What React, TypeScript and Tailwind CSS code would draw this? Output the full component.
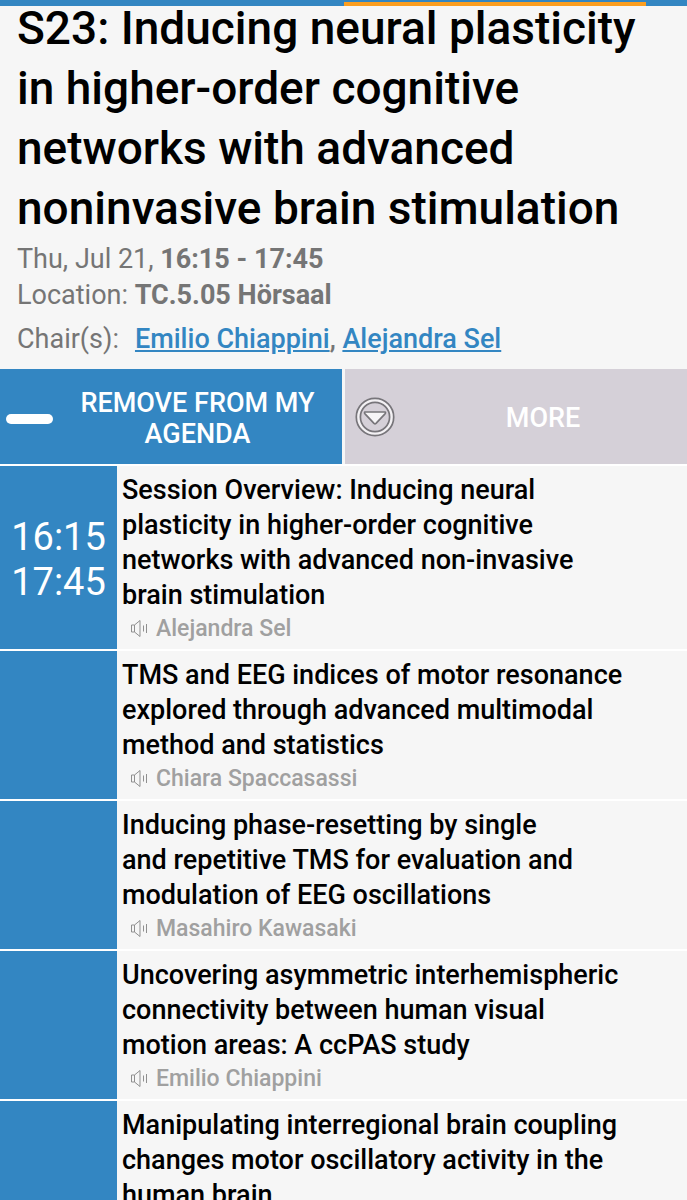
type Talk = {
  lines: string[];
  speaker?: string;
  start?: string;
  end?: string;
};

const talks: Talk[] = [
  {
    start: '16:15',
    end: '17:45',
    lines: [
      'Session Overview: Inducing neural',
      'plasticity in higher-order cognitive',
      'networks with advanced non-invasive',
      'brain stimulation',
    ],
    speaker: 'Alejandra Sel',
  },
  {
    lines: [
      'TMS and EEG indices of motor resonance',
      'explored through advanced multimodal',
      'method and statistics',
    ],
    speaker: 'Chiara Spaccasassi',
  },
  {
    lines: [
      'Inducing phase-resetting by single',
      'and repetitive TMS for evaluation and',
      'modulation of EEG oscillations',
    ],
    speaker: 'Masahiro Kawasaki',
  },
  {
    lines: [
      'Uncovering asymmetric interhemispheric',
      'connectivity between human visual',
      'motion areas: A ccPAS study',
    ],
    speaker: 'Emilio Chiappini',
  },
  {
    lines: [
      'Manipulating interregional brain coupling',
      'changes motor oscillatory activity in the',
      'human brain',
    ],
  },
];

function SpeakerIcon() {
  return (
    <svg width="18" height="18" viewBox="0 0 18 18" fill="none" stroke="#8f8f8f" aria-hidden="true">
      <path d="M1.5 5h3v7h-3zM4.5 5l5.5-4.5v16l-5.5-4.5" />
      <path d="M13.5 5.5v6M16.5 4v9" />
    </svg>
  );
}

function MoreIcon() {
  return (
    <svg width="40" height="40" viewBox="0 0 40 40" fill="none" aria-hidden="true">
      <circle cx="20" cy="20" r="16.8" stroke="#f3f1f4" strokeWidth="3.4" />
      <circle cx="20" cy="20" r="18.7" stroke="#77757a" strokeWidth="1.7" />
      <circle cx="20" cy="20" r="14.6" stroke="#77757a" strokeWidth="1.7" />
      <path d="M10 15h20q1 .5 0 1.8l-9 9.6q-1 .8-2 0l-9-9.6q-1-1.3 0-1.8z" fill="#f6f5f7" stroke="#77757a" strokeWidth="1.7" strokeLinejoin="round" />
    </svg>
  );
}

function TalkRow({ talk }: { talk: Talk }) {
  return (
    <li className="flex border-b-2 border-white">
      <div className="flex w-[117px] shrink-0 flex-col items-center justify-center bg-[#3386c2] pt-1 text-[38px] leading-[45px] text-white">
        {talk.start && <time>{talk.start}</time>}
        {talk.end && <time>{talk.end}</time>}
      </div>
      <div className="min-w-0 flex-1 pt-[7px] pb-1 pl-[5px]">
        <h2 className="text-[27px] leading-[35px] font-medium">
          {talk.lines.map((line) => (
            <span key={line} className="block whitespace-nowrap">
              {line}
            </span>
          ))}
        </h2>
        <div className="flex h-8 items-center gap-2 pl-2 text-[23px] font-medium text-[#a0a0a0]">
          {talk.speaker && (
            <>
              <SpeakerIcon />
              <span>{talk.speaker}</span>
            </>
          )}
        </div>
      </div>
    </li>
  );
}

export default function App() {
  return (
    <div className="min-h-screen bg-[#f6f6f6] font-['Roboto',sans-serif] text-black">
      <div className="flex h-[6px] items-end bg-[#3386c2]">
        <div className="ml-[50%] h-1 w-[44%] bg-[#fb9e20]" />
      </div>

      <header className="px-[17px]">
        <h1 className="-mt-2 text-[46px] leading-[60px] font-medium">
          <span className="block whitespace-nowrap">S23: Inducing neural plasticity</span>
          <span className="block whitespace-nowrap">in higher-order cognitive</span>
          <span className="block whitespace-nowrap">networks with advanced</span>
          <span className="block whitespace-nowrap">noninvasive brain stimulation</span>
        </h1>
        <div className="pt-[3px] text-[27px] leading-9 text-[#757575]">
          <p>
            Thu, Jul 21, <b>16:15 - 17:45</b>
          </p>
          <p>
            Location: <b>TC.5.05 Hörsaal</b>
          </p>
          <p className="mt-2 flex gap-4 pb-3">
            <span>Chair(s):</span>
            <span className="font-medium">
              <a href="#emilio-chiappini" className="text-[#3386c2] underline">
                Emilio Chiappini
              </a>
              ,{' '}
              <a href="#alejandra-sel" className="text-[#3386c2] underline">
                Alejandra Sel
              </a>
            </span>
          </p>
        </div>
      </header>

      <div className="grid grid-cols-2 gap-[3px] border-b-2 border-white text-[27px] leading-[31px] font-medium text-white">
        <button type="button" className="flex h-[95px] items-center bg-[#3386c2] pt-1 pr-3 pl-[6px]">
          <span className="h-[10px] w-[47px] shrink-0 rounded-full bg-white" />
          <span className="flex-1 pl-3 text-center">REMOVE FROM MY AGENDA</span>
        </button>
        <button type="button" className="flex h-[95px] items-center bg-[#d5d0d8] pr-3 pl-[10px]">
          <MoreIcon />
          <span className="flex-1 pt-1 pl-4 text-center">MORE</span>
        </button>
      </div>

      <ul>
        {talks.map((talk) => (
          <TalkRow key={talk.lines[0]} talk={talk} />
        ))}
      </ul>
    </div>
  );
}
